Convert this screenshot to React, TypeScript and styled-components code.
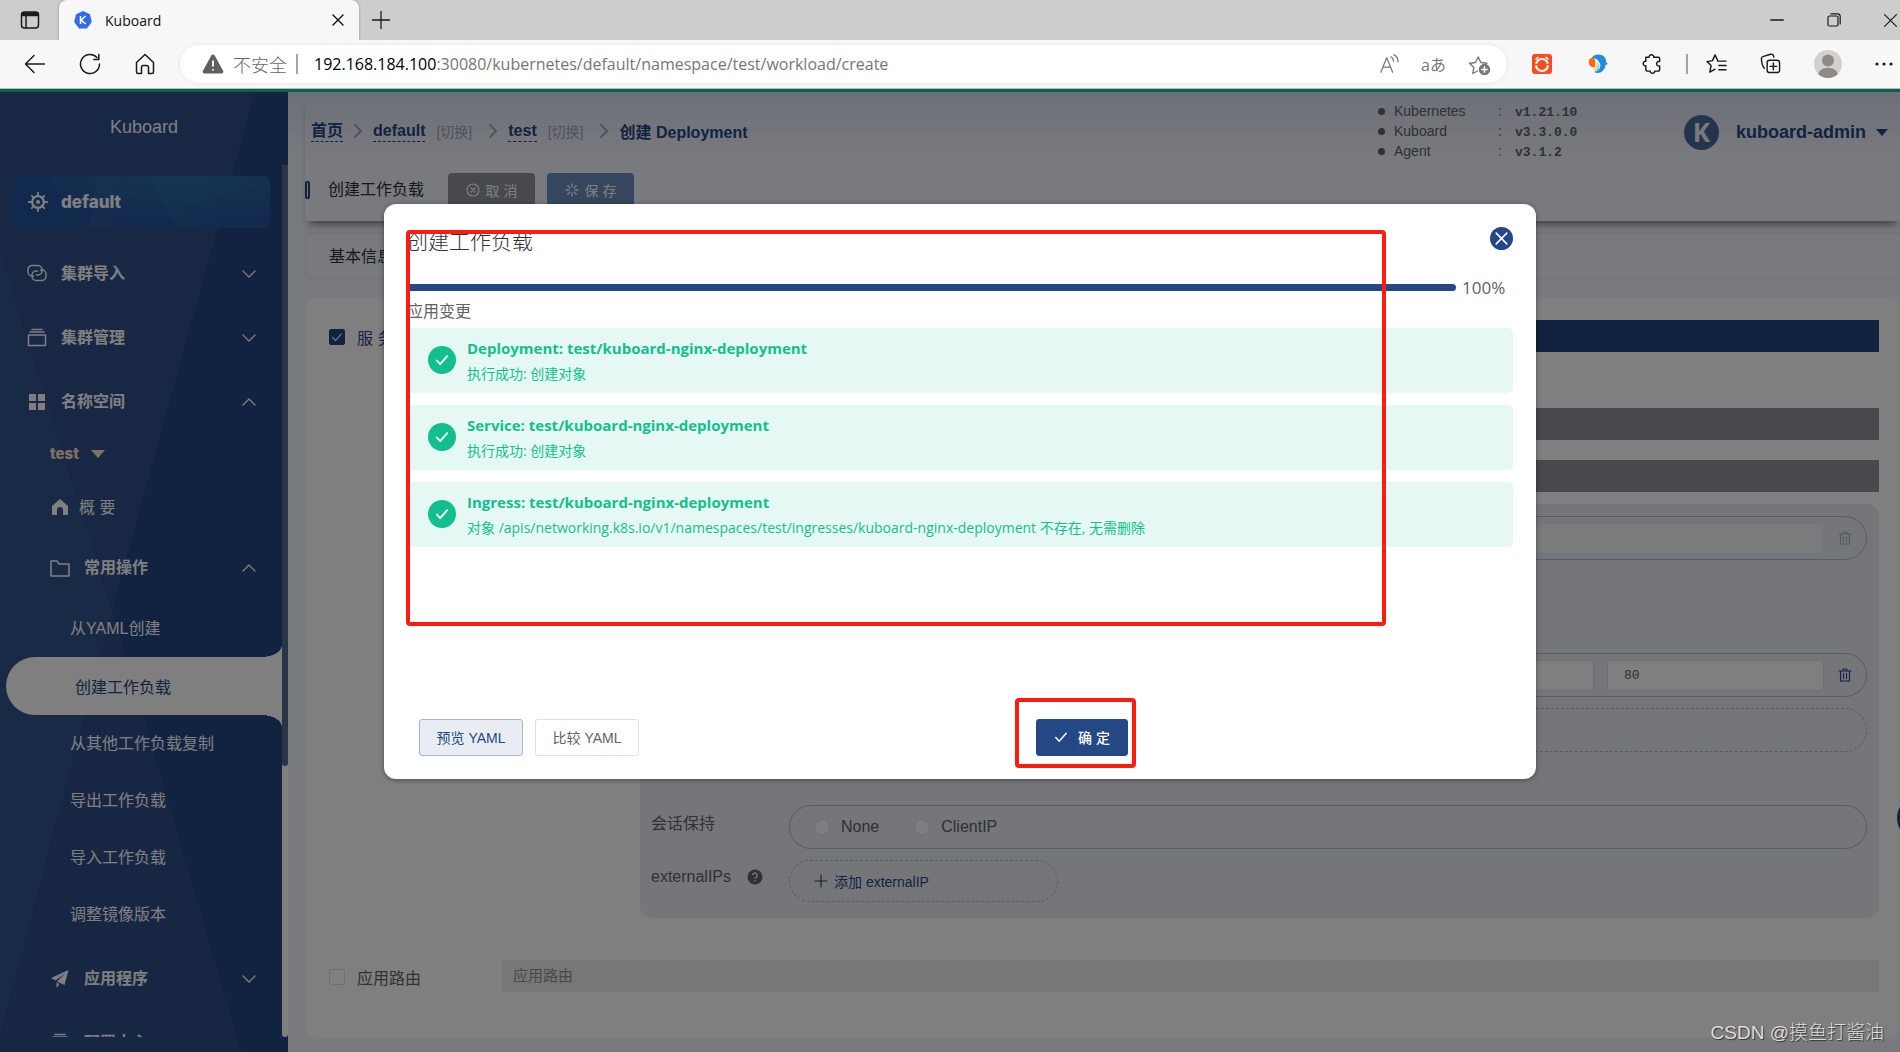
import React from "react";
import styled, { createGlobalStyle, css } from "styled-components";

const sans = `"Liberation Sans", "Noto Sans CJK SC", sans-serif`;
const ui = `"Open Sans", "Noto Sans CJK SC", sans-serif`;
const mono = `"Liberation Mono", "Noto Sans CJK SC", monospace`;

const color = {
  primary: "#244785",
  success: "#13bf8f",
  successBg: "#e5f8f4",
  grey: "#909399",
  text: "#606266",
  page: "#f2f4fb",
  panel: "#e9ecf3",
  outline: "#a9b6d2",
  mark: "#fc1d10",
};

const GlobalStyle = createGlobalStyle`
  *, *::before, *::after { box-sizing: border-box; }
  body { margin: 0; font-family: ${sans}; font-size: 16px; color: ${color.text}; }
  button, input { font-family: inherit; font-size: inherit; margin: 0; }
  button { padding: 0; border: 0; background: none; color: inherit; display: inline-flex; align-items: center; justify-content: center; }
  a { color: inherit; text-decoration: none; }
  svg { display: block; flex: none; }
`;

/* ---------- icons ---------- */

type IconProps = { size?: number; width?: number; children: React.ReactNode; box?: number };

const Icon = ({ size = 20, width = 1.5, box = 24, children }: IconProps) => (
  <svg width={size} height={size} viewBox={`0 0 ${box} ${box}`} fill="none" stroke="currentColor" strokeWidth={width} strokeLinecap="round" strokeLinejoin="round" aria-hidden="true">
    {children}
  </svg>
);

const CloseIcon = ({ size = 16, width = 1.2 }: { size?: number; width?: number }) => (
  <Icon size={size} box={16} width={width}><path d="M3 3l10 10M13 3L3 13" /></Icon>
);
const Chevron = ({ up = false }: { up?: boolean }) => (
  <Icon size={16} box={16} width={1.3}><path d={up ? "M2 11l6-6 6 6" : "M2 5l6 6 6-6"} /></Icon>
);
const HelmIcon = () => (
  <Icon size={20} box={20} width={2.2}>
    <circle cx="10" cy="10" r="5.800" />
    <circle cx="10" cy="10" r="1" />
    <path d="M10 4V.8M10 19.2V16M4 10H.8M19.2 10H16M5.8 5.8L3.8 3.8M16.2 16.2l-2-2M14.2 5.8l2-2M3.8 16.2l2-2" strokeWidth="1.800" />
  </Icon>
);
const LinkIcon = () => (
  <Icon size={20} box={20} width={1.5}>
    <path d="M6.500 12H5a4 4 0 0 1-4-4V5.500a4 4 0 0 1 4-4h6a4 4 0 0 1 4 4V7a4 4 0 0 1-4 4H9.500" />
    <path d="M13.500 6H15a4 4 0 0 1 4 4v2.500a4 4 0 0 1-4 4H9a4 4 0 0 1-4-4V11a4 4 0 0 1 4-4h1.500" />
  </Icon>
);
const StackIcon = () => (
  <Icon size={20} box={20} width={1.5}><path d="M1.500 7h17v10.500h-17zM3 4h14M5 1.500h10" /></Icon>
);
const GridIcon = () => (
  <svg width="20" height="20" viewBox="0 0 20 20" fill="currentColor" aria-hidden="true">
    <path d="M2 2h7v7H2zM11 2h7v7h-7zM2 11h7v7H2zM11 11h7v7h-7z" />
  </svg>
);
const HouseIcon = () => (
  <svg width="20" height="20" viewBox="0 0 20 20" fill="currentColor" aria-hidden="true">
    <path d="M10 1l8 7v9h-5v-5a3 3 0 0 0-6 0v5H2V8z" />
  </svg>
);
const FolderIcon = () => (
  <Icon size={20} box={20} width={1.5}><path d="M1 3h6l2 3h10v12H1z" /></Icon>
);
const PlaneIcon = () => (
  <svg width="20" height="20" viewBox="0 0 20 20" fill="currentColor" aria-hidden="true">
    <path d="M18.500 1L1 9l4.500 2.500L15 4.500 7 12.500l7.500 3.500zM6.500 13.500V19l3-4z" />
  </svg>
);
const TrashIcon = () => (
  <Icon size={14} box={14} width={1.1}><path d="M1 3h12M5 3V1h4v2M2.500 3v10h9V3M5.500 5.500v5M8.500 5.500v5" /></Icon>
);
const Tick = ({ size = 14, width = 1.5 }: { size?: number; width?: number }) => (
  <Icon size={size} box={14} width={width}><path d="M1.800 7.500l3.400 3.700 7-8" /></Icon>
);

/* ---------- browser chrome ---------- */

const Window = styled.div`
  display: flex;
  flex-direction: column;
  height: 100vh;
  min-width: 1200px;
  overflow: hidden;
`;

const TabBar = styled.div`
  display: flex;
  align-items: stretch;
  height: 40px;
  background: #cdcdcd;
  color: #111;
  font-family: ${ui};
`;

const ChromeButton = styled.button<{ $w: number; $tone?: string }>`
  width: ${(p) => p.$w}px;
  height: 40px;
  color: ${(p) => p.$tone || "#1a1a1a"};
`;

const Tab = styled.div`
  display: flex;
  align-items: center;
  gap: 13px;
  width: 300px;
  padding: 0 13px 0 15px;
  background: #f7f7f7;
  border-radius: 8px 8px 0 0;
  box-shadow: 0 0 3px rgba(0, 0, 0, 0.3);
  font-size: 14px;

  span { flex: 1; }
`;

const WindowControls = styled.div`
  display: flex;
  margin-left: auto;
  margin-right: -19px;
`;

const ToolBar = styled.div`
  position: relative;
  display: flex;
  align-items: center;
  height: 49px;
  padding: 0 0 1px 7px;
  background: #f7f7f7;
  border-bottom: 1px solid #bcbcbc;
  color: #1a1a1a;
`;

const AddressBar = styled.div`
  display: flex;
  align-items: center;
  flex: 1;
  height: 38px;
  margin-left: 8px;
  padding: 0 6px 0 22px;
  background: #fff;
  border-radius: 19px;
  box-shadow: 0 0 4px rgba(0, 0, 0, 0.08);
  color: #767676;
  font-family: ${ui};
  font-size: 16px;

  b { font-weight: 400; color: #000; }
`;

const Insecure = styled.span`
  display: flex;
  align-items: center;
  gap: 9px;
  font-size: 18px;
  font-weight: 300;
  color: #666;
`;

const Divider = styled.i`
  width: 2px;
  height: 20px;
  background: #a5a5a5;
`;

const Url = styled.span`
  flex: 1;
  margin-left: 16px;
  white-space: nowrap;
`;

const Profile = styled.button`
  width: 28px;
  height: 28px;
  margin: 0 26px 0 18px;
  border-radius: 50%;
  background: #d3d1cd;
  overflow: hidden;
`;

/* ---------- page frame ---------- */

const Page = styled.div`
  position: relative;
  display: flex;
  flex: 1;
  min-height: 0;
  overflow: hidden;
  border-top: 3px solid #0b6049;
  background: ${color.page};
`;

const SideBar = styled.nav`
  position: relative;
  display: flex;
  flex-direction: column;
  width: 288px;
  flex: none;
  background: ${color.primary};
  color: #fff;
`;

const SideArt = styled.svg`
  position: absolute;
  inset: 0;
  width: 100%;
  height: 100%;
`;

const Brand = styled.div`
  position: relative;
  height: 73px;
  padding-top: 23px;
  line-height: 24px;
  font-size: 18px;
  text-align: center;
`;

const SideScroll = styled.div`
  position: relative;
  display: flex;
  flex: 1;
  min-height: 0;
  overflow: hidden;
  margin-bottom: 15px;
`;

const Menu = styled.ul`
  flex: 1;
  margin: 0;
  padding: 11px 0 0;
  list-style: none;
`;

const Rail = styled.div`
  width: 6px;
  background: #fff;
  border-radius: 3px;
`;

const Thumb = styled.div`
  height: 601px;
  border-radius: 3px;
  background: #53698f;
`;

const ClusterCard = styled.a`
  display: flex;
  align-items: center;
  gap: 13px;
  height: 52px;
  margin: 0 12px 14px;
  padding-left: 16px;
  border-radius: 6px;
  background:
    linear-gradient(100deg, transparent 32%, rgba(255, 255, 255, 0.04) 32%, transparent 50%),
    linear-gradient(64deg, transparent 58%, rgba(80, 190, 210, 0.06) 58%, transparent 82%),
    radial-gradient(ellipse at 70% 0, #2b6ca6 0, transparent 65%),
    #23529a;
  font-family: "Inter", sans-serif;
  font-size: 17px;
  font-weight: 800;
`;

const levels = {
  top: css`height: 64px; padding: 0 25px 0 27px; gap: 14px; font-weight: 700;`,
  group: css`height: 64px; padding: 0 25px 0 50px; gap: 14px; font-weight: 700;`,
  plain: css`height: 62px; padding: 6px 0 0 50px; gap: 9px;`,
  leaf: css`height: 57px; padding-left: 70px;`,
  space: css`height: 40px; padding-left: 50px; gap: 12px; font-family: "Inter", sans-serif; font-size: 15px; font-weight: 800; color: #ffe3c4;`,
};

const MenuLink = styled.a<{ $level: keyof typeof levels }>`
  display: flex;
  align-items: center;
  line-height: 24px;
  font-size: 16px;
  ${(p) => levels[p.$level]}

  span { flex: ${(p) => (p.$level === "space" ? "none" : 1)}; }
`;

const Current = styled.a`
  position: relative;
  display: flex;
  align-items: center;
  height: 58px;
  margin-left: 6px;
  padding-left: 69px;
  border-radius: 29px 0 0 29px;
  background: #fff;
  color: ${color.primary};

  &::before, &::after {
    content: "";
    position: absolute;
    right: 0;
    width: 20px;
    height: 12px;
  }
  &::before { bottom: 100%; background: radial-gradient(ellipse 20px 12px at 0 0, transparent 98%, #fff 100%); }
  &::after { top: 100%; background: radial-gradient(ellipse 20px 12px at 0 100%, transparent 98%, #fff 100%); }
`;

const Group = styled.ul`
  margin: 0 0 4px;
  padding: 0;
  list-style: none;
`;

const Caret = styled.i<{ $w: number; $h: number }>`
  border: ${(p) => p.$w}px solid transparent;
  border-top: ${(p) => p.$h}px solid currentColor;
  border-bottom: 0;
`;

/* ---------- main column ---------- */

const Main = styled.main`
  flex: 1;
  min-width: 0;
  padding-left: 17px;
  background: linear-gradient(#d8e0f0, ${color.page} 66px);
`;

const Header = styled.header`
  display: grid;
  grid-template-columns: 1fr auto;
  height: 129px;
  box-shadow: 0 7px 8px -4px rgba(0, 0, 0, 0.5);
`;

const Crumbs = styled.nav`
  display: flex;
  align-items: center;
  height: 78px;
  padding-left: 6px;
  font-weight: 700;
  color: ${color.primary};
`;

const Crumb = styled.a`
  line-height: 20px;
  border-bottom: 1px dashed ${color.primary};
`;

const Switch = styled.a`
  margin-left: 11px;
  font-size: 14px;
  font-weight: 400;
  color: #99a5c0;
`;

const CrumbSep = styled.span<{ $far?: boolean }>`
  margin: 0 8px 0 ${(p) => (p.$far ? 14 : 8)}px;
  color: #9aa6c0;
`;

const TitleRow = styled.div`
  display: flex;
  align-items: center;
  height: 40px;
`;

const Marker = styled.i`
  width: 5px;
  height: 18px;
  margin-right: 18px;
  border: 2px solid ${color.primary};
  border-radius: 2px;
`;

const PageTitle = styled.h1`
  margin: 0 24px 0 0;
  font-size: 16px;
  line-height: 24px;
  font-weight: 400;
  color: #303133;
`;

const ActionButton = styled.button<{ $bg: string }>`
  height: 34px;
  width: 87px;
  margin-right: 12px;
  gap: 6px;
  border-radius: 4px;
  background: ${(p) => p.$bg};
  color: #fff;
  font-size: 14px;
`;

const HeaderSide = styled.div`
  display: flex;
  align-items: flex-start;
  padding-right: 12px;
`;

const Versions = styled.ul`
  margin: 9px 105px 0 0;
  padding: 0;
  list-style: none;
  font-size: 14px;

  li { display: grid; grid-template-columns: 16px 104px 17px 64px; align-items: center; height: 20px; }
  li::before { content: ""; width: 7px; height: 7px; border-radius: 50%; background: currentColor; }
  code { font-family: ${mono}; font-size: 13px; font-weight: 700; padding-top: 3px; }
`;

const User = styled.button`
  margin-top: 23px;
  height: 35px;
  gap: 10px;
  font-size: 18px;
  font-weight: 700;
  color: ${color.primary};
`;

const Avatar = styled.span`
  width: 35px;
  height: 35px;
  margin-right: 7px;
  border-radius: 50%;
  background: #4b699d;
  color: #f2f4fb;
  font-family: ${ui};
  font-size: 26px;
  line-height: 35px;
  text-align: center;
`;

const Steps = styled.div`
  height: 47px;
  margin: 11px -4px 18px 0;
  padding-left: 23px;
  border: 1px solid #e3e6ee;
  border-radius: 4px;
  line-height: 47px;
  color: #303133;
`;

const Card = styled.section`
  padding: 22px 20px 43px 23px;
  border: 1px solid #fafafa;
  border-radius: 12px;
  background: #fff;
`;

const FieldRow = styled.div<{ $gap: number }>`
  display: grid;
  grid-template-columns: 173px 1fr;
  margin-bottom: ${(p) => p.$gap}px;
`;

const CheckLabel = styled.label<{ $on?: boolean }>`
  display: flex;
  align-items: center;
  gap: 12px;
  height: 34px;
  color: ${(p) => (p.$on ? color.primary : color.text)};
`;

const CheckBox = styled.span`
  position: relative;
  display: grid;
  color: #fff;

  input { appearance: none; width: 16px; height: 16px; border: 1px solid #dcdfe6; border-radius: 2px; background: #fff; }
  input:checked { background: ${color.primary}; border-color: ${color.primary}; }
  svg { position: absolute; top: 2px; left: 2px; }
`;

const Bar = styled.div<{ $bg: string }>`
  height: 32px;
  padding-left: 11px;
  background: ${(p) => p.$bg};
  color: ${color.grey};
  font-size: 15px;
  line-height: 31px;
`;

const Nested = styled.div`
  margin-left: 138px;
`;

const BarStack = styled.div`
  display: grid;
  gap: 20px;
  padding: 56px 0 12px;
`;

const Panel = styled.div`
  display: grid;
  grid-template-columns: 138px 1fr;
  padding: 12px 12px 16px 11px;
  border-radius: 12px;
  background: ${color.panel};
`;

const PanelLabel = styled.div`
  display: flex;
  align-items: center;
  gap: 16px;
  height: 33px;
`;

const Pill = styled.div<{ $dashed?: boolean; $after?: number }>`
  display: flex;
  align-items: center;
  gap: 13px;
  height: 44px;
  margin-bottom: ${(p) => p.$after || 0}px;
  padding-left: 24px;
  border: 1px ${(p) => (p.$dashed ? "dashed" : "solid")} ${color.outline};
  border-radius: 22px;
`;

const TextBox = styled.input<{ $w?: number }>`
  flex: ${(p) => (p.$w ? `0 0 ${p.$w}px` : 1)};
  min-width: 0;
  width: 0;
  height: 31px;
  padding: 0 16px;
  border: 1px solid #dcdfe6;
  border-radius: 4px;
  background: #fff;
  color: ${color.text};
  font-family: ${mono};
  font-size: 13px;

  &:disabled { background: #f5f7fa; border-color: #e8ebf2; }
`;

const TrashButton = styled.button`
  width: 42px;
  height: 42px;
  margin-left: -13px;
  color: ${color.primary};
  &:disabled { opacity: 0.35; }
`;

const RadioLabel = styled.label`
  display: flex;
  align-items: center;
  gap: 11px;
  margin-right: 22px;

  input { appearance: none; width: 16px; height: 16px; border: 1px solid #dcdfe6; border-radius: 50%; background: #fff; }
`;

const AddButton = styled.button`
  justify-content: flex-start;
  gap: 6px;
  width: 269px;
  height: 42px;
  padding-left: 24px;
  border: 1px dashed ${color.outline};
  border-radius: 21px;
  color: ${color.primary};
  font-size: 14px;
`;

const FloatButton = styled.button`
  position: absolute;
  top: 703px;
  right: -43px;
  width: 46px;
  height: 46px;
  border-radius: 50%;
  background: ${color.primary};
`;

/* ---------- dialog ---------- */

const Backdrop = styled.div`
  position: absolute;
  inset: 0;
  display: flex;
  justify-content: center;
  align-items: flex-start;
  padding: 112px 0 0 20px;
  background: rgba(0, 0, 0, 0.5);
`;

const Dialog = styled.div`
  width: 1152px;
  max-width: 92%;
  padding: 22px 23px 23px;
  border-radius: 12px;
  background: #fff;
  box-shadow: 0 1px 5px rgba(0, 0, 0, 0.4);
  font-family: ${ui};
`;

const DialogHead = styled.div`
  display: flex;
  align-items: center;
  justify-content: space-between;
  height: 28px;
  margin-bottom: 21px;

  h2 { margin: 0; font-size: 21px; font-weight: 300; color: #303133; }
`;

const CloseButton = styled.button`
  width: 23px;
  height: 23px;
  margin-top: -4px;
  border-radius: 50%;
  background: ${color.primary};
  color: #fff;
`;

const ProgressRow = styled.div`
  display: flex;
  align-items: center;
  gap: 6px;
  height: 24px;
  font-size: 17px;

  span { width: 51px; }
`;

const Progress = styled.div`
  flex: 1;
  height: 7px;
  border-radius: 4px;
  background: ${color.primary};
`;

const Caption = styled.div`
  height: 29px;
  line-height: 24px;
  font-size: 16px;
`;

const Results = styled.div`
  display: flex;
  flex-direction: column;
  gap: 12px;
  min-height: 391px;
`;

const Result = styled.div`
  display: flex;
  align-items: center;
  gap: 11px;
  height: 65px;
  padding: 0 0 1px 21px;
  border-radius: 5px;
  background: ${color.successBg};
  color: ${color.success};
  font-size: 14px;
  line-height: 24px;

  strong { display: block; font-size: 15px; line-height: 28px; }
`;

const Badge = styled.span`
  display: grid;
  place-items: center;
  width: 28px;
  height: 28px;
  border-radius: 50%;
  background: ${color.success};
  color: #fff;
`;

const DialogFoot = styled.div`
  display: grid;
  grid-template-columns: 617px auto;
  justify-content: start;
  padding-left: 12px;

  div { display: flex; gap: 12px; }
`;

const kinds = {
  soft: css`width: 104px; background: #e9edf3; border-color: #a7b5ce; color: ${color.primary};`,
  plain: css`width: 104px; background: #fff; border-color: #dcdfe6; color: ${color.text};`,
  solid: css`width: 92px; background: ${color.primary}; border-color: ${color.primary}; color: #fff; font-weight: 500;`,
};

const DialogButton = styled.button<{ $kind: keyof typeof kinds }>`
  height: 37px;
  gap: 10px;
  border: 1px solid;
  border-radius: 3px;
  padding-bottom: 2px;
  font-family: ${sans};
  font-size: 14px;
  ${(p) => kinds[p.$kind]}
`;

const MarkBox = styled.i<{ $x: number; $y: number; $w: number; $h: number }>`
  position: absolute;
  left: ${(p) => p.$x}px;
  top: ${(p) => p.$y}px;
  width: ${(p) => p.$w}px;
  height: ${(p) => p.$h}px;
  border: 4px solid ${color.mark};
  border-radius: 4px;
  pointer-events: none;
`;

const Watermark = styled.div`
  position: absolute;
  right: 16px;
  bottom: 5px;
  font-size: 19px;
  line-height: 28px;
  font-weight: 300;
  color: #dcdcdc;
  text-shadow: 1px 1px 1px #333;
`;

/* ---------- data ---------- */

const versions = [
  ["Kubernetes", "v1.21.10"],
  ["Kuboard", "v3.3.0.0"],
  ["Agent", "v3.1.2"],
];

const results = [
  ["Deployment: test/kuboard-nginx-deployment", "执行成功: 创建对象"],
  ["Service: test/kuboard-nginx-deployment", "执行成功: 创建对象"],
  ["Ingress: test/kuboard-nginx-deployment", "对象 /apis/networking.k8s.io/v1/namespaces/test/ingresses/kuboard-nginx-deployment 不存在, 无需删除"],
];

const operations = ["从YAML创建", "创建工作负载", "从其他工作负载复制", "导出工作负载", "导入工作负载", "调整镜像版本"];

const Separator = ({ far = false }: { far?: boolean }) => (
  <CrumbSep $far={far}><Icon size={14} box={14} width={2}><path d="M4 1l6 6-6 6" /></Icon></CrumbSep>
);

/* ---------- sections ---------- */

const Browser = () => (
  <>
    <TabBar>
      <ChromeButton $w={59} aria-label="Tab actions">
        <Icon size={20} box={20} width={1.5}><rect x="1.500" y="2" width="17" height="16" rx="3" /><path d="M3 4.200h14" strokeWidth="4" /><path d="M6 6v12" /></Icon>
      </ChromeButton>
      <Tab>
        <svg width="18" height="18" viewBox="0 0 18 18" aria-hidden="true">
          <path d="M9 0l7 3.300L17.800 11l-4.900 6.400H5.100L.200 11 2 3.300z" fill="#326ce5" />
          <path d="M6.500 5v8M11.500 5L7 9.200 11.800 13" fill="none" stroke="#fff" strokeWidth="1.500" />
        </svg>
        <span>Kuboard</span>
        <button aria-label="Close tab"><CloseIcon width={1.400} /></button>
      </Tab>
      <ChromeButton $w={44} aria-label="New tab"><Icon size={20} box={20} width={1.300}><path d="M10 1.500v17M1.500 10h17" /></Icon></ChromeButton>
      <WindowControls>
        <ChromeButton $w={57} aria-label="Minimize"><Icon size={14} box={14} width={1.300}><path d="M.700 7h12.600" /></Icon></ChromeButton>
        <ChromeButton $w={57} aria-label="Restore"><Icon size={14} box={14} width={1.200}><rect x="1" y="3" width="10" height="10" rx="1.500" /><path d="M4 .800h6.500A2.700 2.700 0 0 1 13.200 3.500V11" /></Icon></ChromeButton>
        <ChromeButton $w={57} aria-label="Close"><CloseIcon size={19} width={1} /></ChromeButton>
      </WindowControls>
    </TabBar>
    <ToolBar>
      <ChromeButton $w={55} aria-label="Back"><Icon size={22} box={22} width={1.500}><path d="M20.500 11H1.500M10 2.500L1.500 11l8.500 8.500" /></Icon></ChromeButton>
      <ChromeButton $w={55} aria-label="Refresh"><Icon size={22} box={22} width={1.500}><path d="M20.500 11a9.500 9.500 0 1 1-2.600-6.500M19.800 1.500v5h-5" /></Icon></ChromeButton>
      <ChromeButton $w={55} aria-label="Home"><Icon size={22} box={22} width={1.500}><path d="M2.500 9.500L11 1.500l8.500 8v9.500a1.500 1.500 0 0 1-1.500 1.500h-3.500v-6a2 2 0 0 0-2-2h-3a2 2 0 0 0-2 2v6H4A1.500 1.500 0 0 1 2.500 19z" /></Icon></ChromeButton>
      <AddressBar>
        <Insecure>
          <svg width="22" height="20" viewBox="0 0 22 20" aria-hidden="true">
            <path d="M9.300 1.500a2 2 0 0 1 3.400 0l8.500 15.500a1.800 1.800 0 0 1-1.600 2.500H2.400A1.800 1.800 0 0 1 .800 17z" fill="#5f5f5f" />
            <path d="M11 6.500v6M11 15v1.500" stroke="#fff" strokeWidth="1.800" />
          </svg>
          不安全
          <Divider />
        </Insecure>
        <Url><b>192.168.184.100</b>:30080/kubernetes/default/namespace/test/workload/create</Url>
        <ChromeButton $w={45} $tone="#777" aria-label="Read aloud"><Icon size={20} box={22} width={1.400}><path d="M2 20L8.500 4 15 20M4.300 14.500h8.400M13 3c2 1 3 3 3 5M16.500 1c3 1.500 4.500 4 4.500 7.500" /></Icon></ChromeButton>
        <ChromeButton $w={45} $tone="#777" aria-label="Translate">aあ</ChromeButton>
        <ChromeButton $w={45} $tone="#777" aria-label="Add to favorites">
          <Icon size={22} box={22} width={1.400}>
            <path d="M9.500 18L4.800 20.500l1-6L1.500 10.300l6-.800L10.200 4l2.700 5.500 6 .800-1.500 1.500" />
            <circle cx="16.500" cy="16.500" r="5" fill="#777" /><path d="M16.500 13.800v5.400M13.800 16.500h5.400" stroke="#fff" />
          </Icon>
        </ChromeButton>
      </AddressBar>
      <ChromeButton $w={69} aria-label="Clock extension">
        <svg width="20" height="20" viewBox="0 0 20 20" aria-hidden="true">
          <rect width="20" height="20" rx="3" fill="#fc4b1f" />
          <circle cx="10" cy="11" r="6" fill="none" stroke="#fff" strokeWidth="2.200" />
          <path d="M3.500 5.500l3-2.500M16.500 5.500l-3-2.500" stroke="#fff" strokeWidth="1.600" />
          <path d="M1 10.500h5M14 10.500h5" stroke="#fc4b1f" strokeWidth="1.600" />
        </svg>
      </ChromeButton>
      <ChromeButton $w={43} aria-label="Bird extension">
        <svg width="20" height="20" viewBox="0 0 20 20" aria-hidden="true">
          <path d="M5 2C11-2 19 2 18 8l2 2-2.500 1C17 17 11 21 6 18c6-2 8-6 5-10C9.500 5 7 4 4 4z" fill="#1f8fdc" />
          <path d="M1 6c2-3 5-3 6 0v7c-4 1-7-2-6-7z" fill="#fb6a12" />
          <path d="M7 6c3 1 4 6 1 11-2-1-3-2-3-4h2z" fill="#fcd7a0" />
          <path d="M9 8c2 3 1 6-2 9 5-1 6-6 2-9z" fill="#7cc7f2" />
        </svg>
      </ChromeButton>
      <ChromeButton $w={67} aria-label="Extensions"><Icon size={21} box={22} width={1.500}><path d="M4 4.500h3.500c-.800-3.500 5.500-3.500 4.700 0H17a1.500 1.500 0 0 1 1.500 1.500v3c-4.300-1-4.300 5.500 0 4.700V17a2 2 0 0 1-2 2h-3.300c.800 3-5.200 3-4.500 0H6a2 2 0 0 1-2-2v-3.800c-3.600.800-3.600-5 0-4.500z" /></Icon></ChromeButton>
      <Divider />
      <ChromeButton $w={56} aria-label="Favorites"><Icon size={21} box={22} width={1.500}><path d="M12.500 8.500L9.500 2 6.800 8 1 9l4.300 4.200L4 20l5.500-3M13.500 8.500H21M13.500 13H21M13.500 17.500H21" /></Icon></ChromeButton>
      <ChromeButton $w={52} aria-label="Collections"><Icon size={21} box={22} width={1.500}><rect x="7.500" y="7.500" width="13" height="13" rx="2.500" /><path d="M14 10.500v7M10.500 14h7M4.500 16C2 13 1.500 8 1.500 5.500A2 2 0 0 1 3 3.800l8-2.500c2-.500 3.200.500 3.500 3" /></Icon></ChromeButton>
      <Profile aria-label="Profile">
        <svg width="28" height="28" viewBox="0 0 28 28" aria-hidden="true"><circle cx="14" cy="10.500" r="6" fill="#8f8a85" /><path d="M4 26c0-11 20-11 20 0v2H4z" fill="#8f8a85" /></svg>
      </Profile>
      <ChromeButton $w={32} aria-label="Settings">
        <svg width="20" height="20" viewBox="0 0 20 20" fill="currentColor" aria-hidden="true"><circle cx="3" cy="10" r="1.600" /><circle cx="10" cy="10" r="1.600" /><circle cx="17" cy="10" r="1.600" /></svg>
      </ChromeButton>
    </ToolBar>
  </>
);

const Side = () => (
  <SideBar>
    <SideArt viewBox="0 0 288 960" preserveAspectRatio="none" aria-hidden="true">
      <path d="M0 0h255L112 518 0 160z" fill="#2f4f89" />
      <path d="M0 160l112 358L0 945z" fill="#33548d" />
      <path d="M112 518L0 945v15h241z" fill="#2f4e87" />
    </SideArt>
    <Brand>Kuboard</Brand>
    <SideScroll>
      <Menu>
        <li><ClusterCard href="#cluster"><HelmIcon />default</ClusterCard></li>
        <li><MenuLink $level="top" href="#import"><LinkIcon /><span>集群导入</span><Chevron /></MenuLink></li>
        <li><MenuLink $level="top" href="#manage"><StackIcon /><span>集群管理</span><Chevron /></MenuLink></li>
        <li><MenuLink $level="top" href="#namespace"><GridIcon /><span>名称空间</span><Chevron up /></MenuLink></li>
        <li><MenuLink $level="space" href="#test"><span>test</span><Caret $w={7} $h={8} /></MenuLink></li>
        <li><MenuLink $level="plain" href="#summary"><HouseIcon /><span>概 要</span></MenuLink></li>
        <li>
          <MenuLink $level="group" href="#ops"><FolderIcon /><span>常用操作</span><Chevron up /></MenuLink>
          <Group>
            {operations.map((name) => (
              <li key={name}>
                {name === "创建工作负载"
                  ? <Current href="#create" aria-current="page">{name}</Current>
                  : <MenuLink $level="leaf" href="#op">{name}</MenuLink>}
              </li>
            ))}
          </Group>
        </li>
        <li><MenuLink $level="group" href="#apps"><PlaneIcon /><span>应用程序</span><Chevron /></MenuLink></li>
        <li><MenuLink $level="group" href="#config"><StackIcon /><span>配置中心</span></MenuLink></li>
      </Menu>
      <Rail><Thumb /></Rail>
    </SideScroll>
  </SideBar>
);

const Form = () => (
  <Card>
    <FieldRow $gap={42}>
      <CheckLabel $on><CheckBox><input type="checkbox" defaultChecked /><Tick size={12} width={1.300} /></CheckBox>服 务</CheckLabel>
      <div>
        <Bar $bg={color.primary} />
        <Nested>
          <BarStack><Bar $bg={color.grey} /><Bar $bg={color.grey} /></BarStack>
          <Panel>
            <PanelLabel />
            <div>
              <Pill $after={93}>
                <TextBox disabled aria-label="Service name" />
                <TrashButton disabled aria-label="Delete"><TrashIcon /></TrashButton>
              </Pill>
              <Pill $after={11}>
                <TextBox aria-label="Port name" />
                <TextBox $w={217} defaultValue="80" aria-label="Port" />
                <TrashButton aria-label="Delete port"><TrashIcon /></TrashButton>
              </Pill>
              <Pill $dashed $after={53} />
            </div>
            <PanelLabel>会话保持</PanelLabel>
            <Pill $after={11}>
              <RadioLabel><input type="radio" name="affinity" />None</RadioLabel>
              <RadioLabel><input type="radio" name="affinity" />ClientIP</RadioLabel>
            </Pill>
            <PanelLabel>
              externalIPs
              <svg width="16" height="16" viewBox="0 0 16 16" aria-hidden="true"><circle cx="8" cy="8" r="7.500" fill="#606266" /><path d="M5.800 6.300a2.200 2.200 0 1 1 3.400 1.800c-.800.500-1.200.800-1.200 1.700M8 11v1.500" fill="none" stroke="#e9ecf3" strokeWidth="1.400" /></svg>
            </PanelLabel>
            <AddButton><Icon size={14} box={14} width={1.200}><path d="M7 1v12M1 7h12" /></Icon>添加 externalIP</AddButton>
          </Panel>
        </Nested>
      </div>
    </FieldRow>
    <FieldRow $gap={0}>
      <CheckLabel><CheckBox><input type="checkbox" /></CheckBox>应用路由</CheckLabel>
      <Bar $bg="#eeeeee">应用路由</Bar>
    </FieldRow>
  </Card>
);

const Content = () => (
  <Main>
    <Header>
      <div>
        <Crumbs>
          <Crumb href="#home">首页</Crumb><Separator />
          <Crumb href="#default">default</Crumb><Switch href="#switch">[切换]</Switch><Separator far />
          <Crumb href="#test">test</Crumb><Switch href="#switch">[切换]</Switch><Separator far />
          创建 Deployment
        </Crumbs>
        <TitleRow>
          <Marker />
          <PageTitle>创建工作负载</PageTitle>
          <ActionButton $bg={color.grey}>
            <Icon size={14} box={14} width={1.200}><circle cx="7" cy="7" r="6" /><path d="M5 5l4 4M9 5L5 9" /></Icon>取 消
          </ActionButton>
          <ActionButton $bg="#6d8cbf">
            <Icon size={14} box={14} width={1.300}><path d="M7 1v3M7 10v3M1 7h3M10 7h3M2.800 2.800l2 2M9.200 9.200l2 2M11.200 2.800l-2 2M2.800 11.200l2-2" /></Icon>保 存
          </ActionButton>
        </TitleRow>
      </div>
      <HeaderSide>
        <Versions>
          {versions.map(([name, version]) => (
            <li key={name}>{name}<span>:</span><code>{version}</code></li>
          ))}
        </Versions>
        <User><Avatar>K</Avatar>kuboard-admin<Caret $w={6} $h={7} /></User>
      </HeaderSide>
    </Header>
    <Steps>基本信息</Steps>
    <Form />
  </Main>
);

const ResultDialog = () => (
  <Backdrop>
    <Dialog role="dialog" aria-modal="true" aria-labelledby="dialog-title">
      <DialogHead>
        <h2 id="dialog-title">创建工作负载</h2>
        <CloseButton aria-label="Close dialog"><CloseIcon size={17} width={1.500} /></CloseButton>
      </DialogHead>
      <ProgressRow><Progress /><span>100%</span></ProgressRow>
      <Caption>应用变更</Caption>
      <Results>
        {results.map(([title, detail]) => (
          <Result key={title}>
            <Badge><Tick width={1.800} /></Badge>
            <div><strong>{title}</strong>{detail}</div>
          </Result>
        ))}
      </Results>
      <DialogFoot>
        <div>
          <DialogButton $kind="soft">预览 YAML</DialogButton>
          <DialogButton $kind="plain">比较 YAML</DialogButton>
        </div>
        <DialogButton $kind="solid"><Tick />确 定</DialogButton>
      </DialogFoot>
    </Dialog>
    <MarkBox $x={406} $y={138} $w={980} $h={396} />
    <MarkBox $x={1015} $y={606} $w={121} $h={70} />
    <Watermark>CSDN @摸鱼打酱油</Watermark>
  </Backdrop>
);

export default function App() {
  return (
    <Window>
      <GlobalStyle />
      <Browser />
      <Page>
        <Side />
        <Content />
        <FloatButton aria-label="Help" />
        <ResultDialog />
      </Page>
    </Window>
  );
}
